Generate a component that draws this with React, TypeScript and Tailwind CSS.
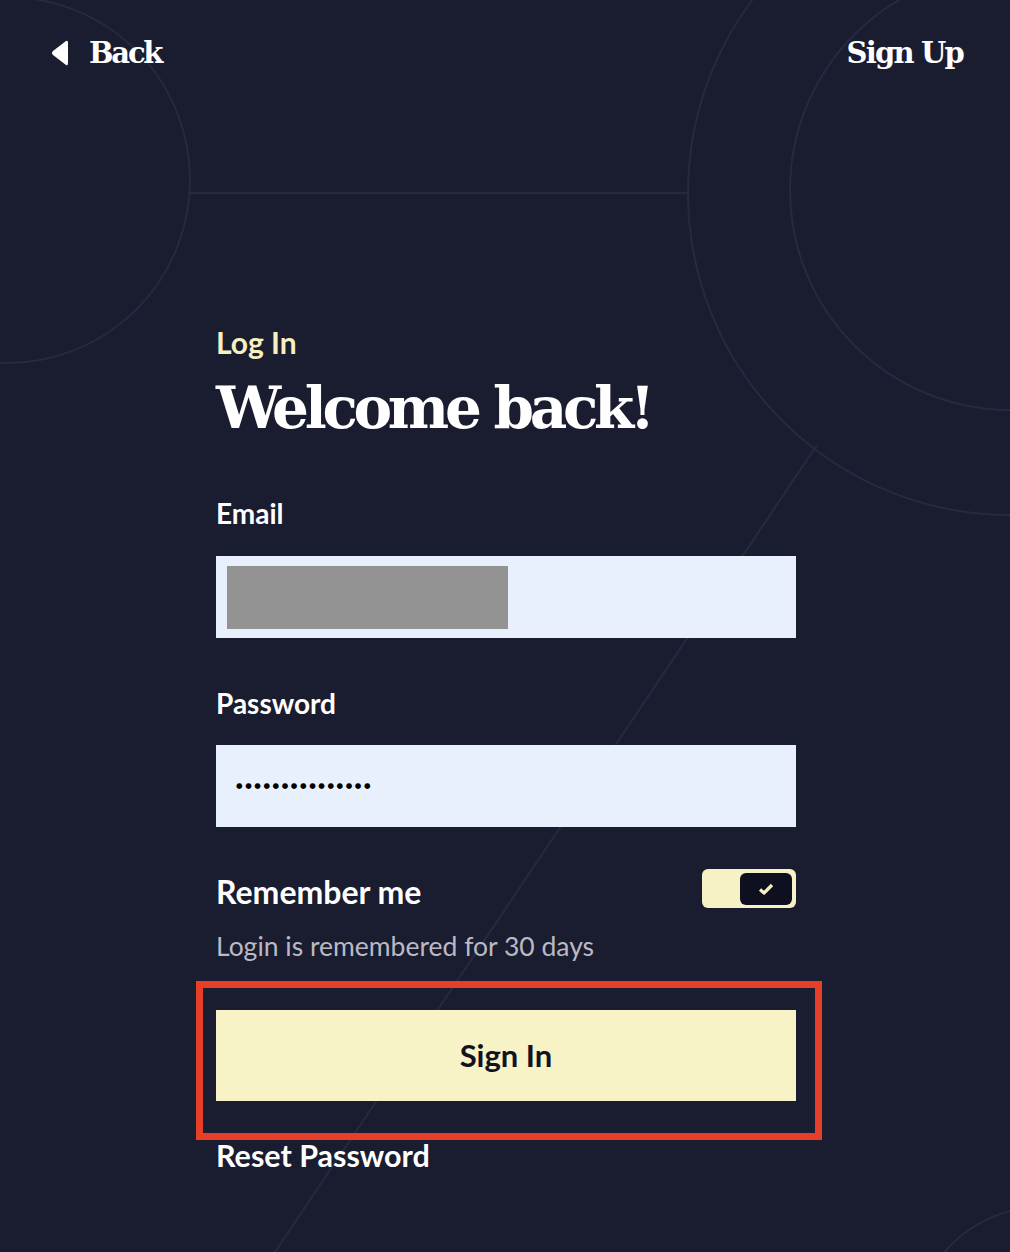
import React from "react";

const serif = "font-['DejaVu_Serif',serif]";
const sans = "font-['Lato','Noto_Sans',sans-serif]";

function Backdrop() {
    return (
        <svg className="absolute inset-0 h-full w-full" viewBox="0 0 1010 1252" fill="none">
            <g stroke="#262a40" strokeWidth="2">
                <circle cx="7" cy="180" r="183" />
                <line x1="190" y1="193" x2="688" y2="193" />
                <circle cx="1010" cy="193" r="322" />
                <circle cx="1010" cy="190" r="220" />
                <line x1="817" y1="445" x2="275" y2="1252" />
                <circle cx="1042" cy="1335" r="128" />
            </g>
        </svg>
    );
}

function Toggle() {
    return (
        <div className="flex h-[39px] w-[94px] items-center justify-end rounded-[6px] bg-[#f6f2c6] pr-[4px]">
            <div className="flex h-[32px] w-[52px] items-center justify-center rounded-[6px] bg-[#0e0f1f]">
                <svg width="16" height="12" viewBox="0 0 16 12">
                    <path d="M2 6.5 L6 10 L14 2" stroke="#f6f2c6" strokeWidth="3.2" fill="none" strokeLinejoin="round" />
                </svg>
            </div>
        </div>
    );
}

export default function App() {
    return (
        <main className="relative h-[1252px] w-full overflow-hidden bg-[#1a1c2f] text-white">
            <Backdrop />

            <header className="relative flex items-start justify-between pl-[51px] pr-[47px] pt-[34px]">
                <a href="#" className="flex items-center gap-[21px]">
                    <svg width="17" height="28" viewBox="0 0 17 28">
                        <path d="M15 2 Q17 1 17 4 L17 24 Q17 27 15 26 L2 16 Q0 14 2 12 Z" fill="#ffffff" />
                    </svg>
                    <span className={`${serif} text-[29px] font-bold leading-[38px] tracking-[-2.2px]`}>Back</span>
                </a>
                <a href="#" className={`${serif} text-[29px] font-bold leading-[38px] tracking-[-1.8px]`}>
                    Sign Up
                </a>
            </header>

            <section className="relative ml-[216px] mt-[253px] w-[580px]">
                <p className={`${sans} text-[30px] font-bold leading-[34px] text-[#f6f0c0]`}>Log In</p>
                <h1 className={`${serif} mt-[14px] text-[58px] font-bold leading-[70px] tracking-[-4.3px]`}>
                    Welcome back!
                </h1>

                <label className={`${sans} mt-[55px] block text-[28px] font-bold leading-[30px]`}>Email</label>
                <div className="mt-[28px] flex h-[82px] items-center bg-[#e8f0fe] px-[11px]">
                    <div className="h-[63px] w-[281px] bg-[#939393]" />
                </div>

                <label className={`${sans} mt-[50px] block text-[28px] font-bold leading-[30px]`}>Password</label>
                <div className="mt-[27px] flex h-[82px] items-center bg-[#e8f0fe] px-[20px]">
                    <span className="font-['DejaVu_Sans',sans-serif] text-[7.5px] leading-none tracking-[2.6px] text-black">
                        ●●●●●●●●●●●●●●●
                    </span>
                </div>

                <div className="mt-[42px] flex items-center justify-between">
                    <span className={`${sans} mt-[6px] text-[32px] font-bold leading-[33px]`}>Remember me</span>
                    <Toggle />
                </div>
                <p className={`${sans} mt-[22px] text-[26.5px] leading-[32px] text-[#b9bac4]`}>
                    Login is remembered for 30 days
                </p>

                <div className="relative mt-[48px]">
                    <div className="pointer-events-none absolute left-[-20px] top-[-29px] h-[159px] w-[626px] border-[7px] border-[#e63e27]" />
                    <button className={`${sans} h-[91px] w-full bg-[#f7f3c6] text-[31px] font-bold text-[#12131f]`}>
                        Sign In
                    </button>
                </div>

                <a href="#" className={`${sans} mt-[37px] block text-[30.5px] font-bold leading-[34px]`}>
                    Reset Password
                </a>
            </section>
        </main>
    );
}
